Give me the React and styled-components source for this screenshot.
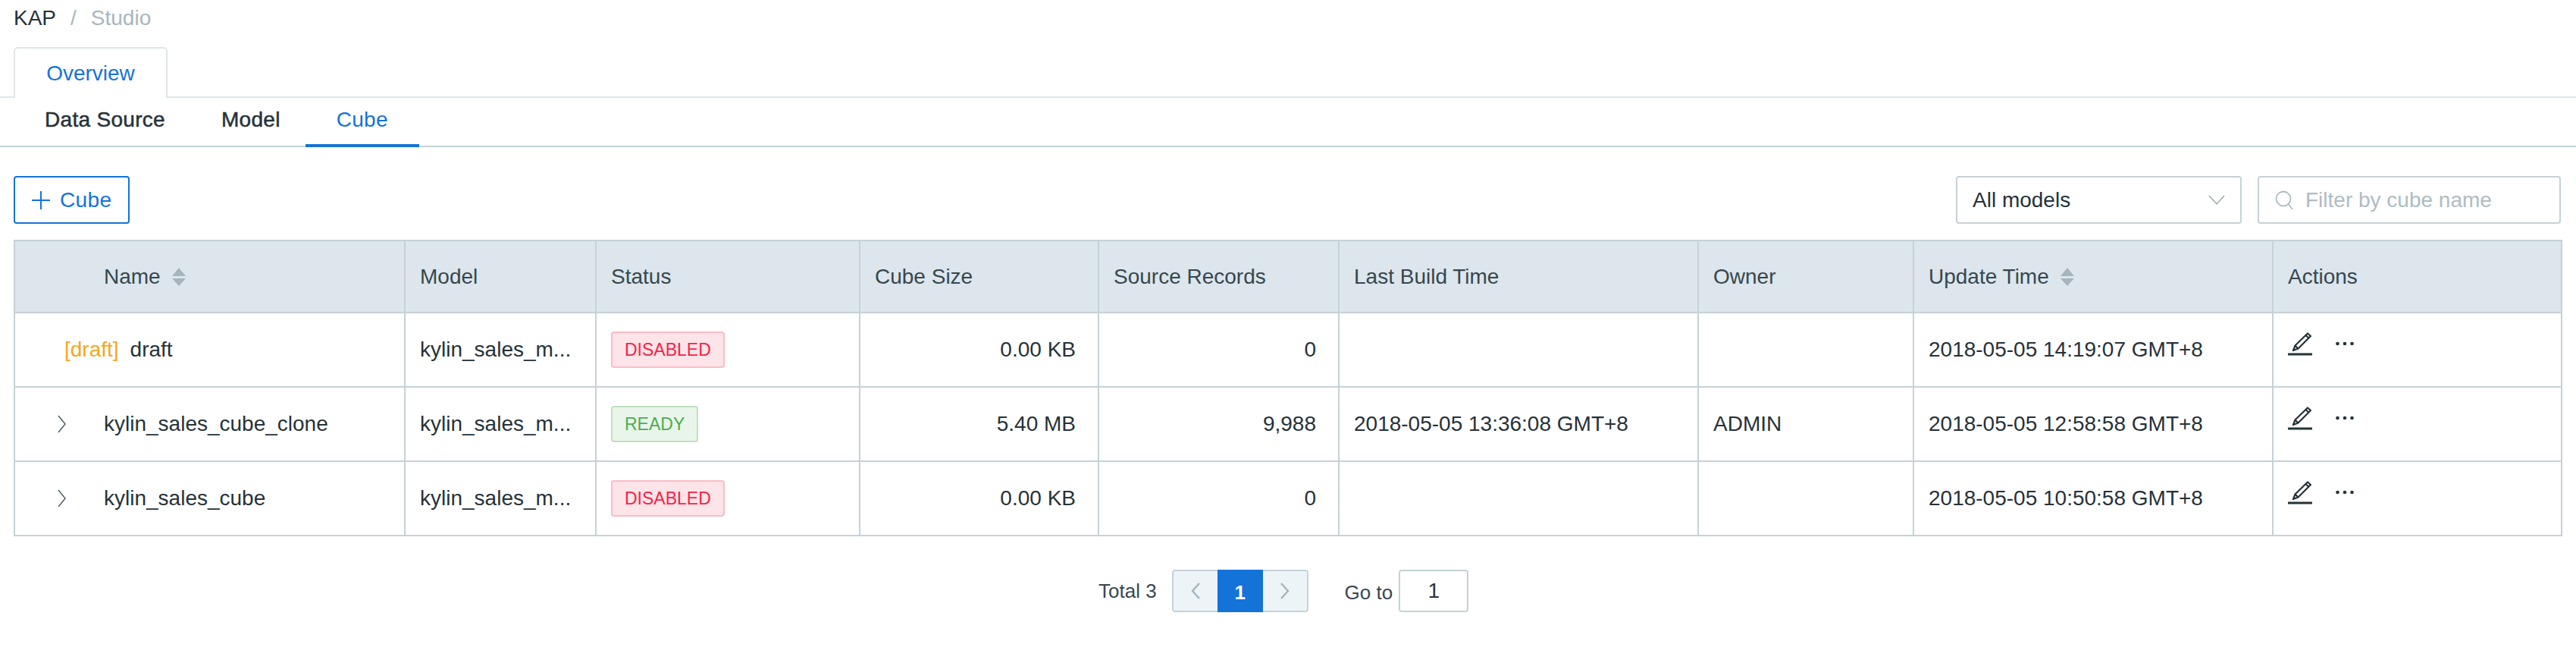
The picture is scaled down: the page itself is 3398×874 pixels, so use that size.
import React from 'react';
import styled, { createGlobalStyle } from 'styled-components';

const blue = '#1473d8';
const line = '#c5d2d8';

const GlobalStyle = createGlobalStyle`
  html, body {
    margin: 0;
    background: #fff;
    font-family: 'Liberation Sans', Arial, sans-serif;
    font-size: 28px;
    color: #263238;
  }
`;

const Page = styled.div`
  width: 3398px;
  height: 874px;
  overflow: hidden;
  background: #fff;
`;

const Breadcrumb = styled.div`
  display: flex;
  align-items: center;
  height: 62px;
  padding: 0 0 14px 18px;
  box-sizing: border-box;
`;

const Crumb = styled.span`
  color: ${(p) => (p.$muted ? '#a9b6bd' : '#263238')};
`;

const CrumbSep = styled.span`
  color: #a9b6bd;
  margin: 0 19px;
`;

const TabBar = styled.div`
  display: flex;
  height: 65px;
  padding-left: 18px;
  border-bottom: 2px solid #dfe6ea;
`;

const Tab = styled.div`
  display: flex;
  align-items: center;
  justify-content: center;
  width: 203px;
  height: 67px;
  box-sizing: border-box;
  background: #fff;
  color: ${blue};
  border: 2px solid #dfe6ea;
  border-bottom: 0;
  border-radius: 6px 6px 0 0;
`;

const SubTabs = styled.div`
  display: flex;
  height: 63px;
  padding-left: 18px;
  border-bottom: 2px solid ${line};
`;

const SubTab = styled.div`
  display: flex;
  align-items: center;
  height: 65px;
  box-sizing: border-box;
  padding: 0 41px 4px;
  margin-left: ${(p) => (p.$first ? 0 : -8)}px;
  letter-spacing: 0.3px;
  color: ${(p) => (p.$active ? blue : '#263238')};
  -webkit-text-stroke: ${(p) => (p.$active ? 0 : 0.5)}px #263238;
  border-bottom: 4px solid ${(p) => (p.$active ? blue : 'transparent')};
`;

const Toolbar = styled.div`
  display: flex;
  align-items: center;
  height: 63px;
  margin: 38px 20px 21px 18px;
`;

const AddButton = styled.div`
  display: flex;
  align-items: center;
  gap: 13px;
  height: 63px;
  width: 153px;
  box-sizing: border-box;
  padding-left: 22px;
  letter-spacing: 0.4px;
  color: ${blue};
  border: 2px solid ${blue};
  border-radius: 4px;
`;

const Select = styled.div`
  display: flex;
  align-items: center;
  justify-content: space-between;
  width: 377px;
  height: 63px;
  box-sizing: border-box;
  margin-left: auto;
  padding: 0 20px;
  border: 2px solid ${line};
  border-radius: 4px;
`;

const Search = styled.div`
  display: flex;
  align-items: center;
  gap: 16px;
  width: 400px;
  height: 63px;
  box-sizing: border-box;
  margin-left: 21px;
  padding-left: 21px;
  color: #aebcc4;
  border: 2px solid ${line};
  border-radius: 4px;
`;

const Table = styled.table`
  width: 3360px;
  margin-left: 18px;
  table-layout: fixed;
  border-collapse: collapse;
`;

const HeadCell = styled.th`
  height: 95px;
  box-sizing: border-box;
  padding: 0 19px;
  background: #dce6ec;
  border: 2px solid ${line};
  color: #37474f;
  font-weight: normal;
  text-align: left;
`;

const HeadInner = styled.div`
  display: flex;
  align-items: center;
  gap: 14px;
  padding-left: ${(p) => p.$indent || 0}px;
`;

const Cell = styled.td`
  height: 98px;
  padding: ${(p) => (p.$top ? '24px 19px 0' : '0 29px 0 19px')};
  border: 2px solid ${line};
  text-align: ${(p) => (p.$right ? 'right' : 'left')};
  vertical-align: ${(p) => (p.$top ? 'top' : 'middle')};
  box-sizing: border-box;
  white-space: nowrap;
`;

const NameCell = styled.div`
  display: flex;
  align-items: center;
  margin-left: -19px;
`;

const Expander = styled.div`
  display: flex;
  align-items: center;
  width: 117px;
  padding-left: 56px;
  box-sizing: border-box;
`;

const DraftLabel = styled.span`
  margin: 0 15px 0 65px;
  color: #f5a81c;
`;

const Tag = styled.span`
  display: inline-flex;
  align-items: center;
  height: 48px;
  box-sizing: border-box;
  padding: 0 16px;
  font-size: 23px;
  border-radius: 4px;
  color: ${(p) => (p.$ok ? '#4cae4f' : '#f5224a')};
  background: ${(p) => (p.$ok ? '#e9f5ea' : '#fde4e8')};
  border: 2px solid ${(p) => (p.$ok ? '#bfe0c1' : '#fbbcc8')};
`;

const Actions = styled.div`
  display: flex;
  align-items: flex-start;
  gap: 31px;
`;

const Pager = styled.div`
  display: flex;
  align-items: center;
  height: 56px;
  margin: 44px 0 0 1449px;
  font-size: 26px;
  color: #37474f;
`;

const PageGroup = styled.div`
  display: flex;
  height: 56px;
  margin-left: 20px;
  box-sizing: border-box;
  border-radius: 4px;
  overflow: hidden;
`;

const PageArrow = styled.div`
  display: flex;
  align-items: center;
  justify-content: center;
  width: 60px;
  box-sizing: border-box;
  background: #edf4f8;
  border: 2px solid ${line};
  border-${(p) => (p.$prev ? 'right' : 'left')}: 0;
  border-radius: ${(p) => (p.$prev ? '4px 0 0 4px' : '0 4px 4px 0')};
`;

const PageNumber = styled.div`
  display: flex;
  align-items: center;
  justify-content: center;
  width: 60px;
  padding-top: 4px;
  box-sizing: border-box;
  background: ${blue};
  color: #fff;
  font-weight: bold;
`;

const GoTo = styled.span`
  margin-left: 48px;
  padding-top: 4px;
`;

const PageInput = styled.div`
  display: flex;
  align-items: center;
  justify-content: center;
  width: 92px;
  height: 56px;
  box-sizing: border-box;
  margin-left: 8px;
  font-size: 28px;
  color: #263238;
  border: 2px solid ${line};
  border-radius: 4px;
`;

const SortCaret = () => (
  <svg width="20" height="24" viewBox="0 0 20 24">
    <path d="M10 0l9 11H1z M1 14h18l-9 10z" fill="#a6b4bc" />
  </svg>
);

const Chevron = () => (
  <svg width="11" height="24" viewBox="0 0 11 24" fill="none" stroke="#4a5963" strokeWidth="1.4">
    <path d="M1 1l9 11-9 11" />
  </svg>
);

const Pencil = () => (
  <svg width="32" height="32" viewBox="0 0 32 32" fill="none" stroke="#263238">
    <path
      d="M26 2.5l4 3.5L13.5 22.5 7 25l2.5-6.5zM23.5 5l4 3.8M9.5 18.5l4 4"
      strokeWidth="2.2"
      strokeLinejoin="round"
    />
    <path d="M0 30h32" strokeWidth="3" />
  </svg>
);

const Dots = () => (
  <svg width="24" height="32" viewBox="0 0 24 32" fill="#263238">
    <circle cx="2.5" cy="16" r="2.3" />
    <circle cx="12" cy="16" r="2.3" />
    <circle cx="21.5" cy="16" r="2.3" />
  </svg>
);

const columns = [
  { label: 'Name', width: 515, sort: true, indent: 98 },
  { label: 'Model', width: 252 },
  { label: 'Status', width: 348 },
  { label: 'Cube Size', width: 315 },
  { label: 'Source Records', width: 317 },
  { label: 'Last Build Time', width: 474 },
  { label: 'Owner', width: 284 },
  { label: 'Update Time', width: 474, sort: true },
  { label: 'Actions', width: 381 },
];

const rows = [
  {
    name: 'draft',
    draft: true,
    ok: false,
    size: '0.00 KB',
    records: '0',
    build: '',
    owner: '',
    update: '2018-05-05 14:19:07 GMT+8',
  },
  {
    name: 'kylin_sales_cube_clone',
    ok: true,
    size: '5.40 MB',
    records: '9,988',
    build: '2018-05-05 13:36:08 GMT+8',
    owner: 'ADMIN',
    update: '2018-05-05 12:58:58 GMT+8',
  },
  {
    name: 'kylin_sales_cube',
    ok: false,
    size: '0.00 KB',
    records: '0',
    build: '',
    owner: '',
    update: '2018-05-05 10:50:58 GMT+8',
  },
];

const App = () => (
  <Page>
    <GlobalStyle />
    <Breadcrumb>
      <Crumb>KAP</Crumb>
      <CrumbSep>/</CrumbSep>
      <Crumb $muted>Studio</Crumb>
    </Breadcrumb>

    <TabBar>
      <Tab>Overview</Tab>
    </TabBar>

    <SubTabs>
      <SubTab $first>Data Source</SubTab>
      <SubTab>Model</SubTab>
      <SubTab $active>Cube</SubTab>
    </SubTabs>

    <Toolbar>
      <AddButton>
        <svg width="24" height="24" viewBox="0 0 24 24" stroke={blue} strokeWidth="2">
          <path d="M12 0v24M0 12h24" />
        </svg>
        Cube
      </AddButton>
      <Select>
        All models
        <svg width="22" height="14" viewBox="0 0 22 14" fill="none" stroke="#9aa9b2" strokeWidth="1.5">
          <path d="M1 1l10 11L21 1" />
        </svg>
      </Select>
      <Search>
        <svg width="24" height="26" viewBox="0 0 24 26" fill="none" stroke="#aebcc4" strokeWidth="1.8">
          <circle cx="11" cy="11" r="9.5" />
          <path d="M17.5 18l5.5 7" />
        </svg>
        Filter by cube name
      </Search>
    </Toolbar>

    <Table>
      <colgroup>
        {columns.map((col) => (
          <col key={col.label} width={col.width} />
        ))}
      </colgroup>
      <thead>
        <tr>
          {columns.map((col) => (
            <HeadCell key={col.label}>
              <HeadInner $indent={col.indent}>
                {col.label}
                {col.sort && <SortCaret />}
              </HeadInner>
            </HeadCell>
          ))}
        </tr>
      </thead>
      <tbody>
        {rows.map((row) => (
          <tr key={row.name}>
            <Cell>
              <NameCell>
                {row.draft ? (
                  <DraftLabel>[draft]</DraftLabel>
                ) : (
                  <Expander>
                    <Chevron />
                  </Expander>
                )}
                {row.name}
              </NameCell>
            </Cell>
            <Cell>kylin_sales_m...</Cell>
            <Cell>
              <Tag $ok={row.ok}>{row.ok ? 'READY' : 'DISABLED'}</Tag>
            </Cell>
            <Cell $right>{row.size}</Cell>
            <Cell $right>{row.records}</Cell>
            <Cell>{row.build}</Cell>
            <Cell>{row.owner}</Cell>
            <Cell>{row.update}</Cell>
            <Cell $top>
              <Actions>
                <Pencil />
                <Dots />
              </Actions>
            </Cell>
          </tr>
        ))}
      </tbody>
    </Table>

    <Pager>
      <span>Total 3</span>
      <PageGroup>
        <PageArrow $prev>
          <svg width="12" height="22" viewBox="0 0 12 22" fill="none" stroke="#a6b4bc" strokeWidth="2.4">
            <path d="M11 1L2 11l9 10" />
          </svg>
        </PageArrow>
        <PageNumber>1</PageNumber>
        <PageArrow>
          <svg width="12" height="22" viewBox="0 0 12 22" fill="none" stroke="#a6b4bc" strokeWidth="2.4">
            <path d="M1 1l9 10-9 10" />
          </svg>
        </PageArrow>
      </PageGroup>
      <GoTo>Go to</GoTo>
      <PageInput>1</PageInput>
    </Pager>
  </Page>
);

export default App;
